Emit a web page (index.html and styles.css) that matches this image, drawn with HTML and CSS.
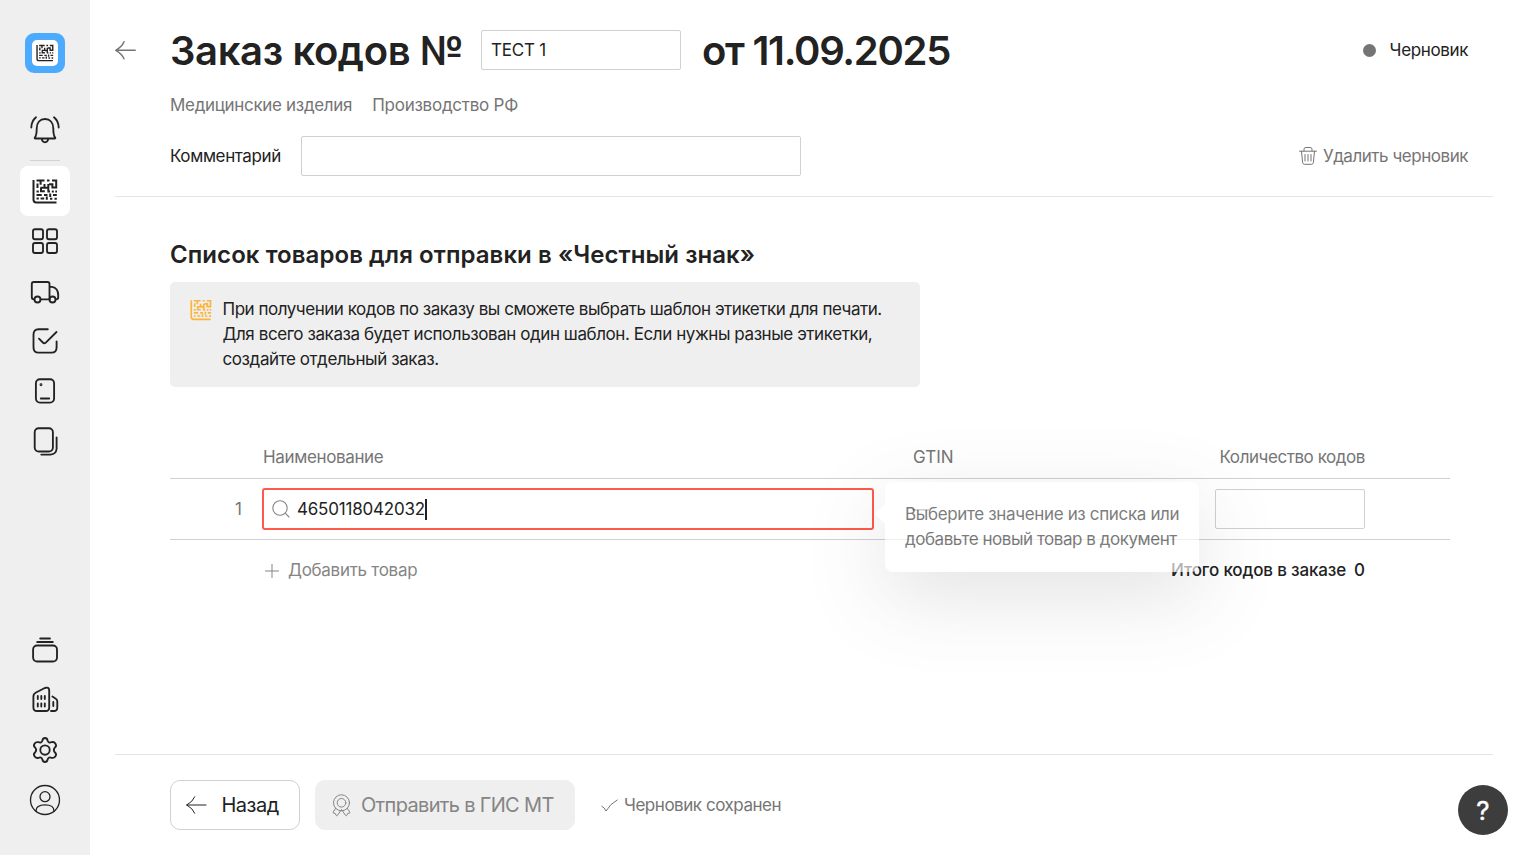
FILE: index.html
```html
<!DOCTYPE html>
<html lang="ru">
<head>
<meta charset="utf-8">
<title>Заказ кодов</title>
<link rel="stylesheet" href="styles.css">
</head>
<body>
<svg class="defs" width="0" height="0">
  <symbol id="dm" viewBox="0 0 26 25">
    <path d="M1.5 1V20.800Q1.500 23.500 4.200 23.500H24.500"/>
    <path d="M4.500 1.600H12.500M8.600 1.600V5.800M5.500 4.500V9M15 1.600H17.500M20 1.600H24.200V8.600H20.400V5.200H17M12.500 5V8.700H8.400M9 8.700V12.200H12.800M16.300 5V12M16.300 8.800H13M4.500 12.400H6.800M15.400 12.400H18M19.800 12.400H21.800M23.300 12.400H25M4.500 16H9.700M12 16H15.500M18.200 14.500V18M21 16H24.800M4.500 19.600H6.800M8.600 19.600H12.200M14.800 17.500V20.700M18 19.700H20.300M22.500 19.700H24.800"/>
  </symbol>
</svg>
<div class="app">
  <nav class="sidebar">
    <a class="logo"><span><svg width="18" height="18" class="dm"><use href="#dm"/></svg></span></a>
    <a class="item bell"><svg width="30" height="30" viewBox="0 0 30 30"><path d="M5 22.3C6.6 20.5 6.7 18 6.7 13.5C6.7 7.5 10 4 15 4s8.300 3.500 8.300 9.500C23.300 18 23.400 20.500 25 22.300Q25.900 23.500 24.500 23.500H5.500Q4.100 23.500 5 22.300ZM11.800 24q.4 3.300 3.200 3.300T18.200 24M6 2.300Q1.500 6 1.300 12.500M24 2.300q4.500 3.700 4.700 10.200"/></svg></a>
    <i class="sep"></i>
    <a class="item active"><svg width="26" height="25" class="dm"><use href="#dm"/></svg></a>
    <a class="item"><svg width="30" height="30" viewBox="0 0 30 30"><rect x="3" y="3.200" width="10" height="10" rx="2"/><rect x="17" y="3.200" width="10" height="10" rx="2"/><rect x="3" y="17" width="10" height="10" rx="2"/><rect x="17" y="17" width="10" height="10" rx="2"/></svg></a>
    <a class="item"><svg class="down" width="30" height="30" viewBox="0 0 30 30"><path d="M4.200 22.300H4Q1.800 22.300 1.800 20V7Q1.800 5 3.800 5H17.500Q19.500 5 19.500 7V22.300H10.600M19.500 9.800H22Q28.200 11 28.200 18V20.500Q28.200 22.300 26 22.300M19.500 22.300H19.700"/><circle cx="7.500" cy="22.500" r="3"/><circle cx="22.500" cy="22.500" r="3"/></svg></a>
    <a class="item"><svg width="30" height="30" viewBox="0 0 30 30"><path d="M17.800 3.200H8.500Q3.500 3.200 3.500 8.500V21.500Q3.500 26.600 8.500 26.600H21.500Q26.600 26.600 26.600 21.500V15.500M9 12.700L12.800 16.500Q14.300 18 15.800 16.600L26.500 6"/></svg></a>
    <a class="item"><svg width="30" height="30" viewBox="0 0 30 30"><rect x="5.900" y="3.200" width="18.200" height="23.400" rx="4"/><path d="M10.800 22.500H19.200"/><circle cx="11" cy="8.700" r=".5"/></svg></a>
    <a class="item"><svg width="30" height="30" viewBox="0 0 30 30"><rect x="4.700" y="2.200" width="18.200" height="23.300" rx="4"/><path d="M26.600 11.500V23Q26 28.200 20.500 28.600H11.300"/></svg></a>
    <div class="grow"></div>
    <a class="item"><svg width="30" height="30" viewBox="0 0 30 30"><rect x="3.100" y="10.500" width="23.900" height="16" rx="4"/><path d="M10.200 3.500H20M7.200 7H22.800"/></svg></a>
    <a class="item"><svg width="30" height="30" viewBox="0 0 30 30"><path d="M3.400 11.600Q3.400 8.800 6 7.500L14.800 3Q19.200 1.500 19.200 5.500V22.500Q19.200 26 15.800 26H7Q3.400 26 3.400 22.500ZM22.400 11.500L25.800 13.700Q27.300 14.700 27.300 16.500V22.500Q27.300 26 24 26H21M7.800 10.900v3.200M11.300 10.900v3.200M14.800 10.900v3.200M7.800 18.300v3.200M11.300 18.300v3.200M14.800 18.300v3.200M23.300 17v4"/></svg></a>
    <a class="item"><svg width="30" height="30" viewBox="0 0 30 30"><path d="M12.400 5.500Q12.900 3 15 3T17.600 5.500Q18.500 8.500 21.500 7.200Q24.200 6.500 25.500 8.700T25.200 12.200Q22.500 15 25.200 17.800Q26.800 19.200 25.500 21.300T21.500 22.800Q18.500 21.500 17.600 24.500Q17.100 27 15 27T12.400 24.500Q11.500 21.500 8.500 22.800Q5.800 23.500 4.500 21.300T4.800 17.800Q7.500 15 4.800 12.200Q3.200 10.800 4.500 8.700T8.500 7.200Q11.500 8.500 12.400 5.500Z"/><circle cx="15" cy="15" r="4.700"/></svg></a>
    <a class="item thin"><svg width="32" height="32" viewBox="0 0 32 32"><circle cx="16" cy="16" r="14.500"/><circle cx="16" cy="12.700" r="5"/><path d="M7 27C7 22.500 10 20.800 16 20.800S25 22.500 25 27"/></svg></a>
  </nav>

  <main class="main">
    <header class="head">
      <div class="title-row">
        <a class="back"><svg width="22" height="20" viewBox="0 0 22 20"><path d="M.8 10.300H20.200M9 1.800Q7 6.800.8 10.300Q7 13.800 9 18.800"/></svg></a>
        <h1 class="t-order">Заказ кодов №</h1>
        <div class="input num"><span class="t-num">ТЕСТ 1</span></div>
        <h1 class="t-date">от 11.09.2025</h1>
        <div class="status"><i></i><span class="t-status">Черновик</span></div>
      </div>
      <div class="tags"><span class="t-tag1">Медицинские изделия</span><span class="t-tag2">Производство РФ</span></div>
      <div class="comment">
        <label class="t-comment">Комментарий</label>
        <div class="input wide"></div>
        <a class="delete"><svg width="18" height="20" viewBox="0 0 18 20"><path d="M.5 5.200H17.500M5 5V3.300Q5 1.500 6.800 1.500H11.200Q13 1.500 13 3.300V5M2.500 5.200L3.600 16.500Q3.800 18.300 5.500 18.300H12.500Q14.200 18.300 14.400 16.500L15.500 5.200M6 8.500V15M9 8.500V15M12 8.500V15"/></svg><span class="t-delete">Удалить черновик</span></a>
      </div>
    </header>

    <section class="content">
      <h2 class="t-list">Список товаров для отправки в «Честный знак»</h2>
      <div class="note">
        <svg width="22" height="22" class="dm"><use href="#dm"/></svg>
        <p><span class="t-n1">При получении кодов по заказу вы сможете выбрать шаблон этикетки для печати.</span><br><span class="t-n2">Для всего заказа будет использован один шаблон. Если нужны разные этикетки,</span><br><span class="t-n3">создайте отдельный заказ.</span></p>
      </div>

      <div class="table">
        <div class="row thead">
          <span></span><span class="t-name">Наименование</span><span class="t-gtin">GTIN</span><span class="right t-qty">Количество кодов</span>
        </div>
        <div class="row line">
          <span class="idx">1</span>
          <div class="search">
            <svg width="18" height="18" viewBox="0 0 18 18"><circle cx="8" cy="8" r="7.200"/><path d="M13.200 13.200L17 17"/></svg>
            <span class="t-code">4650118042032</span><i class="caret"></i>
            <div class="tooltip"><span class="t-tip1">Выберите значение из списка или</span><br><span class="t-tip2">добавьте новый товар в документ</span></div>
          </div>
          <span class="dash">—</span>
          <div class="input qty"></div>
        </div>
        <div class="total">
          <a class="add"><svg width="14" height="14" viewBox="0 0 14 14"><path d="M7 0V14M0 7H14"/></svg><span class="t-add">Добавить товар</span></a>
          <b><span class="t-total">Итого кодов в заказе</span><span class="zero">0</span></b>
        </div>
      </div>
    </section>

    <footer class="foot">
      <a class="btn"><svg width="21" height="18" viewBox="0 0 21 18"><path d="M.7 9H20M8.700 .8Q6.700 5.800 .7 9Q6.700 12.200 8.700 17.200"/></svg><span class="t-back">Назад</span></a>
      <a class="btn send"><svg width="19" height="23" viewBox="0 0 19 23"><circle cx="9.500" cy="8.800" r="8"/><circle cx="9.500" cy="8.800" r="4.300"/><path d="M3.500 14.500L1.200 18.200Q.8 19 1.800 19.200L3.300 19.500L4 21.200Q4.700 22.300 5.500 21.300L9.500 15.500L13.500 21.300Q14.300 22.300 15 21.200L15.700 19.500L17.200 19.200Q18.200 19 17.800 18.200L15.500 14.500"/></svg><span class="t-send">Отправить в ГИС МТ</span></a>
      <span class="saved"><svg width="17" height="13" viewBox="0 0 17 13"><path d="M.8 7.200Q3.800 8.500 5 12Q9 5 16.200 1"/></svg><span class="t-saved">Черновик сохранен</span></span>
    </footer>
  </main>
  <a class="help">?</a>
</div>
</body>
</html>
```
FILE: styles.css
```css
* { box-sizing: border-box; }
body { margin: 0; font: 17px/25px Inter, "Noto Sans", sans-serif; color: #222; background: #fff; overflow: hidden; }
h1, h2, p { margin: 0; }
svg { flex: none; fill: none; stroke: currentColor; stroke-linecap: round; stroke-linejoin: round; }
span, h1, h2, label { white-space: nowrap; }
.defs { position: absolute; }
.app { display: flex; height: 855px; }

.sidebar { width: 90px; background: #efefef; display: flex; flex-direction: column; align-items: center; padding: 33px 0 30px; flex: none; }
.logo { width: 40px; height: 40px; border-radius: 9px; background: #4dabff; display: flex; align-items: center; justify-content: center; margin-bottom: 32px; }
.logo span { width: 26px; height: 26px; background: #fff; border-radius: 5px; display: flex; align-items: center; justify-content: center; }
.dm { stroke-width: 2; stroke-linecap: butt; stroke-linejoin: miter; }
.item { width: 50px; height: 50px; display: flex; align-items: center; justify-content: center; border-radius: 8px; flex: none; }
.item svg { stroke-width: 1.85; }
.item .dm { stroke-width: 2; }
.down { margin-top: 1px; }
.item.thin svg { stroke-width: 1.3; }
.sep { width: 30px; height: 1px; background: #d2d2d2; margin: 5px 0 5px; }
.active { background: #fff; }
.grow { flex: 1; }

.main { flex: 1; padding: 0 35px 0 25px; display: flex; flex-direction: column; }
.head { height: 197px; border-bottom: 1px solid #e4e4e4; padding: 30px 25px 0 0; }
.title-row { display: flex; align-items: center; height: 40px; }
.back { width: 55px; display: flex; color: #757575; }
.back svg { stroke-width: 1.5; }
h1 { font-size: 40px; line-height: 40px; font-weight: 600; padding-top: 1px; }
.t-order { width: 311px; letter-spacing: -.38px; }
.t-date { letter-spacing: -1.28px; }
.input { height: 40px; border: 1px solid #d0d0d0; border-radius: 2px; }
.num { width: 200px; padding: 7px 9px; margin-right: 21px; line-height: 24px; letter-spacing: -.2px; }
.status { margin-left: auto; display: flex; align-items: center; gap: 14px; letter-spacing: -.37px; }
.status i { width: 13px; height: 13px; border-radius: 50%; background: #757575; }
.tags { display: flex; gap: 20px; color: #757575; padding: 23px 0 18px 55px; }
.t-tag1 { letter-spacing: -.32px; }
.t-tag2 { letter-spacing: -.25px; }
.comment { display: flex; align-items: center; padding-left: 55px; }
.t-comment { width: 131px; letter-spacing: -.38px; }
.wide { width: 500px; }
.delete { margin-left: auto; display: flex; align-items: center; gap: 6px; color: #757575; letter-spacing: -.46px; }

.content { flex: 1; padding: 40px 43px 0 55px; }
h2 { font-size: 24px; line-height: 36px; font-weight: 600; letter-spacing: .065px; }
.note { width: 750px; height: 105px; margin-top: 9px; padding: 15px 20px; background: #efefef; border-radius: 5px; display: flex; gap: 10.5px; }
.note svg { color: #fcb43b; margin-top: 2px; }
.t-n1 { letter-spacing: -.465px; }
.t-n2 { letter-spacing: -.425px; }
.t-n3 { letter-spacing: -.4px; }
.table { margin-top: 49px; }
.row { display: grid; grid-template-columns: 92px 651px 302px 150px; align-items: center; border-bottom: 1px solid #d0d0d0; }
.thead { height: 43px; color: #757575; padding-left: 1px; grid-template-columns: 92px 650px 302px 150px; }
.t-name { letter-spacing: -.36px; }
.t-qty { letter-spacing: -.44px; }
.right { justify-self: end; }
.line { height: 61px; }
.idx { color: #757575; width: 72px; text-align: right; }
.search { width: 612px; height: 42px; border: 2px solid #ff5a4a; border-radius: 3px; display: flex; align-items: center; padding-left: 8px; position: relative; }
.search > svg { color: #858585; margin-right: 7px; stroke-width: 1.1; }
.t-code { letter-spacing: -.2px; }
.caret { width: 2px; height: 21px; background: #222; }
.tooltip { position: absolute; left: 621px; top: -8px; width: 314px; height: 90px; padding: 20px; border-radius: 8px; background: #fff; opacity: .66; color: #3a3a3a; box-shadow: 0 24px 80px rgba(0, 0, 0, .17); }
.tooltip::before { content: ""; position: absolute; left: -10px; top: 22px; border: solid transparent; border-width: 10px 10px 10px 0; border-right-color: #fff; }
.t-tip1 { letter-spacing: -.35px; }
.t-tip2 { letter-spacing: -.46px; }
.dash { color: #757575; margin-left: -1px; }
.total { display: flex; justify-content: space-between; padding: 18px 85px 0 95px; }
.add { display: flex; align-items: center; gap: 9px; color: #858585; letter-spacing: -.28px; }
.total b { font-weight: 500; display: flex; gap: 8px; }
.t-total { letter-spacing: -.15px; }

.foot { height: 101px; border-top: 1px solid #e4e4e4; padding: 25px 0 0 55px; display: flex; gap: 15px; }
.btn { width: 130px; height: 50px; border: 1px solid #d0d0d0; border-radius: 10px; display: flex; align-items: center; padding-left: 15px; gap: 14.5px; font-size: 20px; letter-spacing: -.5px; }
.btn.send { width: 260px; background: #efefef; border-color: #efefef; color: #858585; padding-left: 16px; gap: 10px; letter-spacing: -.67px; }
.saved { display: flex; height: 50px; align-items: center; margin-left: 11px; gap: 6px; color: #757575; letter-spacing: -.47px; }
.help { position: absolute; left: 1458px; top: 785px; width: 50px; height: 50px; border-radius: 50%; background: #3d3d3d; color: #fff; font-size: 26px; font-weight: 400; line-height: 51px; text-align: center; -webkit-text-stroke: .4px #fff; }
```
